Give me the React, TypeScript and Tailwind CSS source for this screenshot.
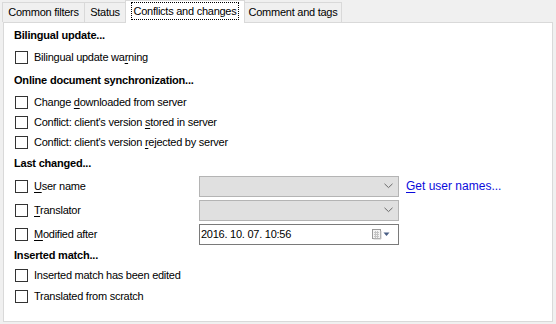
import React from "react";

const font = { fontFamily: '"Liberation Sans", Arial, sans-serif' };

function U({ children }: { children: React.ReactNode }) {
  return <span className="underline underline-offset-[2px]">{children}</span>;
}

function Box() {
  return <span className="block w-[13px] h-[13px] border border-[#333333] bg-white shrink-0" />;
}

function Check({ children, h = "h-[20px]" }: { children: React.ReactNode; h?: string }) {
  return (
    <div className={`flex items-center ${h} pl-[1px] gap-[6px]`}>
      <Box />
      <span className="text-[11px] tracking-[-0.25px] text-black leading-none">{children}</span>
    </div>
  );
}

function Heading({ children }: { children: React.ReactNode }) {
  return (
    <div className="flex items-center h-[18px] text-[11px] font-bold tracking-[-0.2px] text-black leading-none">
      {children}
    </div>
  );
}

function Chevron() {
  return (
    <svg width="9" height="6" viewBox="0 0 9 6" className="shrink-0">
      <path d="M0.5 0.8 L4.5 4.6 L8.5 0.8" fill="none" stroke="#6a6a6a" strokeWidth="1" />
    </svg>
  );
}

function Combo() {
  return (
    <div className="w-[200px] h-[21px] bg-[#e0e0e0] border border-[#b4b4b4] flex items-center justify-end pr-[5px]">
      <Chevron />
    </div>
  );
}

function DatePick() {
  return (
    <div className="w-[200px] h-[21px] bg-white border border-[#7a7a7a] flex items-center pl-[1px] pr-[7px]">
      <span className="flex-1 text-[11px] tracking-[-0.25px] text-black leading-none">2016. 10. 07. 10:56</span>
      <svg width="20" height="12" viewBox="0 0 20 12" className="shrink-0">
        <rect x="1.5" y="1.5" width="8" height="9" fill="#f4f4f4" stroke="#9a9a9a" />
        <path d="M3 4.5h5M3 6.5h5M3 8.5h5M4.5 3v7M6.5 3v7" stroke="#c4c4c4" strokeWidth="1" />
        <path d="M10 3v8H2.5" fill="none" stroke="#c8c8c8" strokeWidth="1" />
        <path d="M12.5 4.5h6l-3 3.5z" fill="#4a5f85" />
      </svg>
    </div>
  );
}

function FieldRow({ label, children, extra }: { label: React.ReactNode; children: React.ReactNode; extra?: React.ReactNode }) {
  return (
    <div className="flex items-center h-[24px]">
      <div className="w-[185px] flex items-center pl-[1px] gap-[6px]">
        <Box />
        <span className="text-[11px] tracking-[-0.25px] text-black leading-none">{label}</span>
      </div>
      {children}
      {extra}
    </div>
  );
}

function Tab({ children, className }: { children: React.ReactNode; className: string }) {
  return (
    <div
      className={`h-[20px] border border-b-0 border-[#d9d9d9] bg-[#f0f0f0] flex items-center justify-center text-[11px] tracking-[-0.25px] text-black leading-none ${className}`}
    >
      {children}
    </div>
  );
}

export default function App() {
  return (
    <div className="w-[556px] h-[324px] bg-[#f0f0f0] overflow-hidden" style={font}>
      <div className="flex items-end h-[22px] pl-[2px]">
        <Tab className="w-[83px]">Common filters</Tab>
        <Tab className="w-[42px] -ml-px">Status</Tab>
        <div className="relative z-10 w-[120px] h-[23px] -mb-px -ml-px bg-white border border-b-0 border-[#d9d9d9] flex items-start justify-center pt-[1px]">
          <div className="h-[18px] px-[2px] border border-dotted border-black flex items-center text-[11px] tracking-[-0.25px] text-black leading-none">
            Conflicts and changes
          </div>
        </div>
        <Tab className="w-[98px] -ml-px">Comment and tags</Tab>
      </div>
      <div className="ml-[3px] w-[550px] h-[300px] bg-white border border-[#d9d9d9] pl-[10px] pt-[3px]">
        <Heading>Bilingual update...</Heading>
        <div className="mt-[3px]">
          <Check>
            Bilingual update wa<U>r</U>ning
          </Check>
        </div>
        <div className="mt-[4px]">
          <Heading>Online document synchronization...</Heading>
        </div>
        <div className="mt-[3px]">
          <Check>
            Change <U>d</U>ownloaded from server
          </Check>
          <Check>
            Conflict: client's version <U>s</U>tored in server
          </Check>
          <Check>
            Conflict: client's version <U>r</U>ejected by server
          </Check>
        </div>
        <div className="mt-[2px]">
          <Heading>Last changed...</Heading>
        </div>
        <div className="mt-[2px]">
          <FieldRow
            label={
              <>
                <U>U</U>ser name
              </>
            }
            extra={
              <span className="ml-[7px] text-[12px] text-[#0b0bdc] leading-none">
                <U>G</U>et user names...
              </span>
            }
          >
            <Combo />
          </FieldRow>
          <FieldRow
            label={
              <>
                <U>T</U>ranslator
              </>
            }
          >
            <Combo />
          </FieldRow>
          <FieldRow
            label={
              <>
                <U>M</U>odified after
              </>
            }
          >
            <DatePick />
          </FieldRow>
        </div>
        <Heading>Inserted match...</Heading>
        <div className="mt-[1px]">
          <Check h="h-[21px]">Inserted match has been edited</Check>
          <Check h="h-[21px]">Translated from scratch</Check>
        </div>
      </div>
    </div>
  );
}
